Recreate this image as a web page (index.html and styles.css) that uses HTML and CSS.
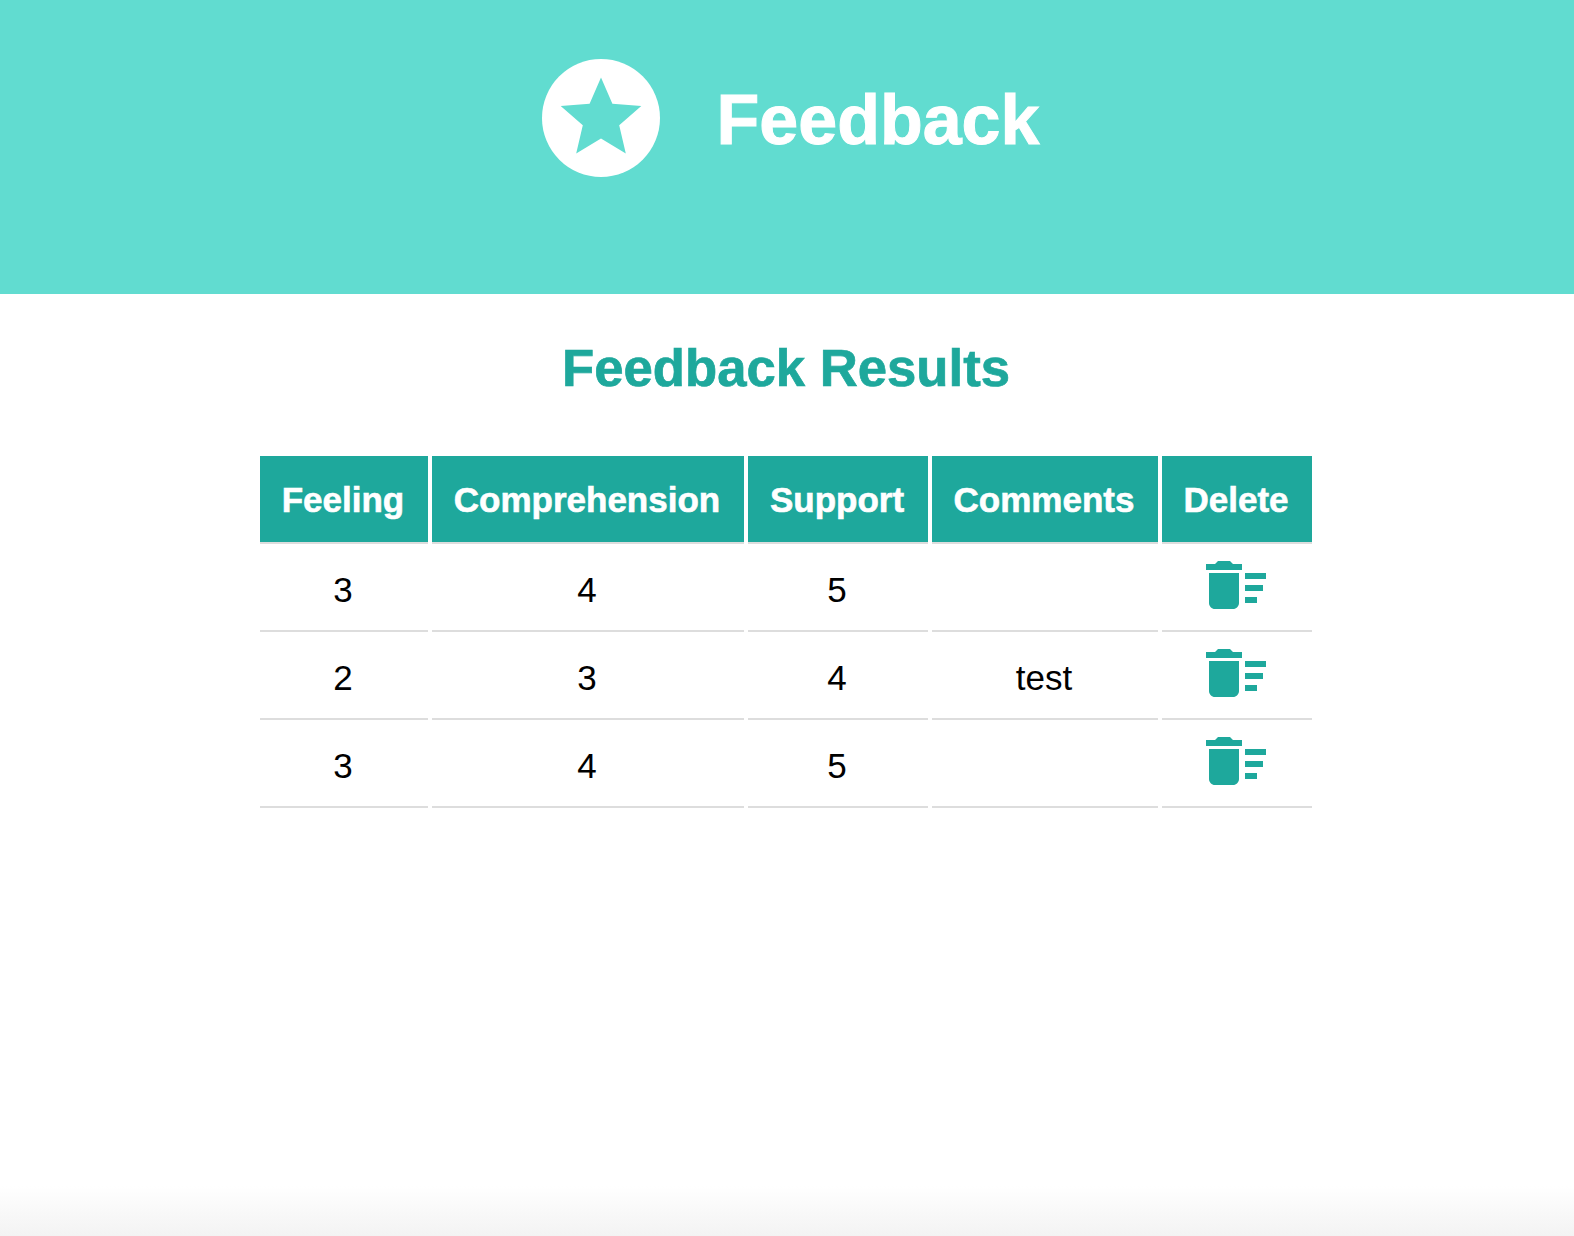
FILE: index.html
```html
<!DOCTYPE html>
<html lang="en">

<head>
    <meta charset="UTF-8">
    <meta name="viewport" content="width=device-width, initial-scale=1.0">
    <title>Feedback</title>
    <link rel="stylesheet" href="styles.css">
</head>

<body>

    <header class="app-header">
        <svg class="app-logo" viewBox="0 0 118 118" aria-hidden="true">
            <circle cx="59" cy="59" r="59" fill="#fff" />
            <polygon class="app-logo-star" points="59,18.5 70.4,44.7 99.3,47 77.2,66.3 83.8,94.5 59,79.5 34.2,94.5 40.8,66.3 18.7,47 47.6,44.7" />
        </svg>
        <h1 class="app-title">Feedback</h1>
    </header>

    <main class="results">
        <h2 class="results-title">Feedback Results</h2>
        <table class="results-table">
            <thead>
                <tr>
                    <th class="col-feeling">Feeling</th>
                    <th class="col-comprehension">Comprehension</th>
                    <th class="col-support">Support</th>
                    <th class="col-comments">Comments</th>
                    <th class="col-delete">Delete</th>
                </tr>
            </thead>
            <tbody>
                <tr>
                    <td>3</td>
                    <td>4</td>
                    <td>5</td>
                    <td></td>
                    <td class="delete-cell">
                        <svg class="delete-icon" viewBox="0 0 24 24" aria-hidden="true"><path d="M15 16h4v2h-4zm0-8h7v2h-7zm0 4h6v2h-6zM3 18c0 1.1.9 2 2 2h6c1.1 0 2-.9 2-2V8H3v10zM14 5h-3l-1-1H6L5 5H2v2h12z" /></svg>
                    </td>
                </tr>
                <tr>
                    <td>2</td>
                    <td>3</td>
                    <td>4</td>
                    <td>test</td>
                    <td class="delete-cell">
                        <svg class="delete-icon" viewBox="0 0 24 24" aria-hidden="true"><path d="M15 16h4v2h-4zm0-8h7v2h-7zm0 4h6v2h-6zM3 18c0 1.1.9 2 2 2h6c1.1 0 2-.9 2-2V8H3v10zM14 5h-3l-1-1H6L5 5H2v2h12z" /></svg>
                    </td>
                </tr>
                <tr>
                    <td>3</td>
                    <td>4</td>
                    <td>5</td>
                    <td></td>
                    <td class="delete-cell">
                        <svg class="delete-icon" viewBox="0 0 24 24" aria-hidden="true"><path d="M15 16h4v2h-4zm0-8h7v2h-7zm0 4h6v2h-6zM3 18c0 1.1.9 2 2 2h6c1.1 0 2-.9 2-2V8H3v10zM14 5h-3l-1-1H6L5 5H2v2h12z" /></svg>
                    </td>
                </tr>
            </tbody>
        </table>
    </main>

</body>

</html>
```

FILE: styles.css
```css
body {
    font-family: 'Liberation Sans', Arial, sans-serif;
    font-size: 35px;
    color: #000;
    margin: 0;
    min-height: 100vh;
    background: linear-gradient(to bottom, #fff calc(100% - 50px), #f3f3f3 100%);
}

.app-header {
    background-color: #61dcd0;
    height: 294px;
    box-sizing: border-box;
    padding: 59px 0 0 7px;
    display: flex;
    justify-content: center;
    align-items: flex-start;
    gap: 57px;
}

.app-logo {
    width: 118px;
    height: 118px;
}

.app-logo-star {
    fill: #61dcd0;
}

.app-title {
    margin: 2px 0 0;
    font-size: 70px;
    line-height: 118px;
    font-weight: bold;
    color: #fff;
    -webkit-text-stroke: 1px #fff;
}

.results {
    padding-right: 2px;
}

.results-title {
    margin: 43px 0 58px;
    text-align: center;
    font-size: 52.7px;
    font-weight: bold;
    color: #1ea89c;
    -webkit-text-stroke: 0.7px #1ea89c;
}

.results-table {
    margin: 0 auto;
    border-collapse: separate;
    border-spacing: 4px 0;
}

.results-table th {
    background-color: #1ea89c;
    color: #fff;
    font-weight: bold;
    -webkit-text-stroke: 0.6px #fff;
    box-sizing: border-box;
    height: 88px;
    padding: 2px 2px 0 0;
    border-bottom: 2px solid #ddd;
}

.col-feeling {
    width: 168px;
}

.col-comprehension {
    width: 312px;
}

.col-support {
    width: 180px;
}

.col-comments {
    width: 226px;
}

.col-delete {
    width: 150px;
}

.results-table td {
    box-sizing: border-box;
    height: 88px;
    padding: 6px 2px 0 0;
    text-align: center;
    border-bottom: 2px solid #ddd;
}

.results-table .delete-cell {
    padding-top: 0;
    line-height: 0;
}

.delete-icon {
    width: 72px;
    height: 72px;
    fill: #1ea89c;
    margin-bottom: 4px;
}
```
